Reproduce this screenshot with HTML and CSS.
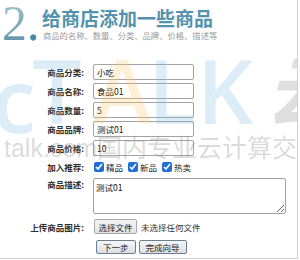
FILE: index.html
```html
<!DOCTYPE html>
<html lang="zh">
<head>
<meta charset="utf-8">
<title>给商店添加一些商品</title>
<link rel="stylesheet" href="styles.css">
</head>
<body>
<div class="page">
  <header class="head">
    <div class="num">2<span class="dot">.</span></div>
    <div class="titles">
      <h1 class="title">给商店添加一些商品</h1>
      <p class="subtitle">商品的名称、数量、分类、品牌、价格、描述等</p>
    </div>
  </header>

  <form class="form">
    <label class="lbl">商品分类:</label>
    <input class="txt" type="text" value="小吃">

    <label class="lbl">商品名称:</label>
    <input class="txt" type="text" value="食品01">

    <label class="lbl">商品数量:</label>
    <input class="txt" type="text" value="5">

    <label class="lbl">商品品牌:</label>
    <input class="txt" type="text" value="测试01">

    <label class="lbl">商品价格:</label>
    <input class="txt" type="text" value="10">

    <label class="lbl">加入推荐:</label>
    <div class="checks">
      <label class="chk"><input type="checkbox" checked><span>精品</span></label>
      <label class="chk"><input type="checkbox" checked><span>新品</span></label>
      <label class="chk"><input type="checkbox" checked><span>热卖</span></label>
    </div>

    <label class="lbl lbl-top">商品描述:</label>
    <textarea class="area">测试01</textarea>

    <label class="lbl">上传商品图片:</label>
    <div class="file">
      <span class="file-btn">选择文件</span>
      <span class="file-name">未选择任何文件</span>
    </div>

    <span class="spacer"></span>
    <div class="actions">
      <button type="button" class="btn">下一步</button>
      <button type="button" class="btn">完成向导</button>
    </div>
  </form>

  <div class="wm" aria-hidden="true">
    <span class="wm-c">c</span>
    <span class="wm-t">T</span>
    <span class="wm-a">A</span>
    <span class="wm-l">L</span>
    <span class="wm-k">K</span>
    <span class="wm-yun">云</span>
    <span class="wm-line">talk.com国内专业云计算交流</span>
  </div>
</div>
</body>
</html>
```

FILE: styles.css
```css
html, body {
  margin: 0;
  padding: 0;
  background: #fff;
}

body {
  font-family: "Noto Sans CJK SC", "Noto Sans", sans-serif;
  color: #333;
}

.page {
  position: relative;
  width: 298px;
  height: 259px;
  box-sizing: border-box;
  border-right: 1px solid #cfcfcf;
  border-bottom: 1px solid #cfcfcf;
  overflow: hidden;
}

/* header */
.head {
  display: flex;
  align-items: flex-start;
  padding-left: 2px;
}

.num {
  font-family: "Liberation Serif", serif;
  font-size: 50px;
  line-height: 46px;
  width: 40px;
  background: linear-gradient(#a7c6d2, #5d90a3);
  -webkit-background-clip: text;
  background-clip: text;
  color: transparent;
}

.dot {
  color: #4c8aa3;
}

.titles {
  padding-top: 6.5px;
}

.title {
  margin: 0;
  font-size: 19px;
  line-height: 22px;
  font-weight: bold;
  color: #5493ad;
}

.subtitle {
  margin: 1px 0 0 1px;
  font-size: 8.3px;
  line-height: 10px;
  color: #9a9a9a;
}

/* form */
.form {
  display: grid;
  grid-template-columns: 84px 200px;
  grid-template-rows: 16px 16px 16px 16px 16px 15px 36px 20px 14px;
  column-gap: 9px;
  row-gap: 3.2px;
  margin-top: 17.5px;
  font-size: 8.5px;
}

.lbl {
  align-self: center;
  text-align: right;
  font-weight: bold;
  color: #2e2e2e;
  line-height: 12px;
  white-space: nowrap;
}

.lbl-top {
  align-self: start;
  padding-top: 0;
}

.txt {
  width: 101px;
  height: 16px;
  box-sizing: border-box;
  margin: 0;
  padding: 0 3px;
  border: 1px solid #a3a3a3;
  border-radius: 2px;
  font: inherit;
  color: #111;
  background: transparent;
  outline: none;
}

.checks {
  display: flex;
  align-items: center;
  gap: 5px;
  padding-left: 1px;
}

.chk {
  display: flex;
  align-items: center;
  gap: 2px;
  color: #222;
}

.chk input {
  width: 10px;
  height: 10px;
  margin: 0;
  accent-color: #1f6fd6;
}

.area {
  width: 193px;
  height: 36px;
  box-sizing: border-box;
  margin: 0;
  padding: 2px 2px;
  border: 1px solid #a3a3a3;
  border-radius: 2px;
  font: inherit;
  line-height: 12px;
  color: #111;
  background: transparent;
}

.file {
  display: flex;
  align-items: center;
  gap: 4px;
  padding-left: 1px;
}

.file-btn {
  display: flex;
  align-items: center;
  justify-content: center;
  width: 43px;
  height: 15px;
  box-sizing: border-box;
  border: 1px solid #a9a9a9;
  border-radius: 2px;
  background: linear-gradient(#f4f4f4, #e4e4e4);
  color: #222;
}

.file-name {
  color: #333;
}

.actions {
  display: flex;
  gap: 3px;
  padding-left: 3px;
}

.btn {
  height: 14px;
  box-sizing: border-box;
  margin: 0;
  padding: 0 6px;
  border: 1px solid #6d7d94;
  border-radius: 2px;
  background: linear-gradient(#f7f7f7, #dadde2);
  font: inherit;
  line-height: 12px;
  color: #222;
}

/* watermark overlay */
.wm {
  position: absolute;
  inset: 0;
  pointer-events: none;
  font-family: "Open Sans", "Liberation Sans", sans-serif;
  line-height: 1;
}

.wm span {
  position: absolute;
  white-space: nowrap;
}

.wm-c, .wm-t, .wm-l, .wm-k {
  color: rgba(120, 185, 225, 0.26);
  font-weight: 600;
  font-size: 88px;
}

.wm-c { left: -8px; top: 55px; }
.wm-t { left: 32px; top: 46px; }
.wm-l { left: 148px; top: 46px; }
.wm-k { left: 197px; top: 46px; }

.wm-a {
  left: 93px;
  top: 46px;
  font-size: 88px;
  font-weight: 600;
  color: rgba(250, 200, 110, 0.28);
}

.wm-yun {
  left: 266px;
  top: 47px;
  font-size: 78px;
  font-weight: bold;
  font-style: italic;
  font-family: "Noto Sans CJK SC", sans-serif;
  color: rgba(150, 150, 150, 0.3);
}

.wm-line {
  left: 4px;
  top: 136px;
  font-size: 25px;
  color: rgba(140, 140, 140, 0.33);
  font-family: "Liberation Sans", "Noto Sans CJK SC", sans-serif;
}
```
